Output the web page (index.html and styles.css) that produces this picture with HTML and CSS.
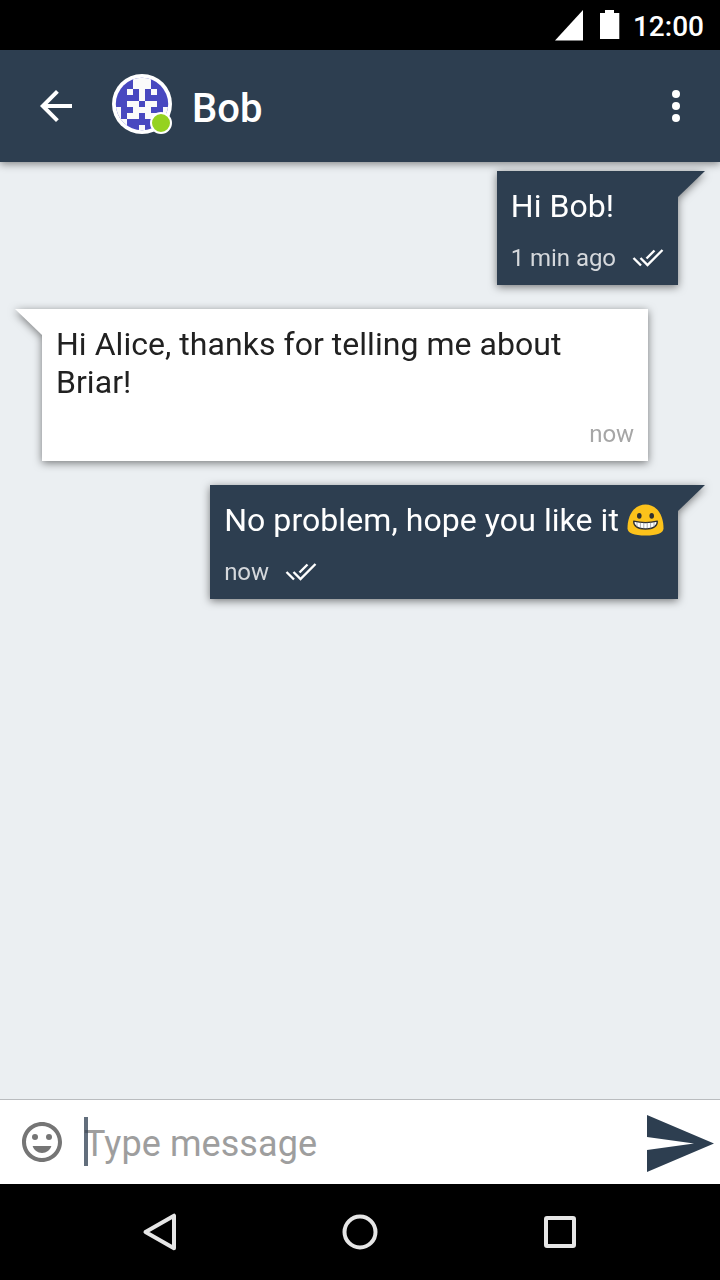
FILE: index.html
```html
<!DOCTYPE html>
<html lang="en">
<head>
<meta charset="utf-8">
<title>Bob</title>
<link rel="stylesheet" href="styles.css">
</head>
<body>
<div class="phone">
  <div class="status-bar">
    <svg class="signal" width="28" height="31" viewBox="0 0 28 31"><path d="M28 0V30.500H0z" fill="#fff"/></svg>
    <svg class="battery" width="20" height="30" viewBox="0 0 20 30"><path d="M5 0h9v3h5.300v26H0V3h5z" fill="#fff"/></svg>
    <span class="clock">12:00</span>
  </div>
  <header class="app-bar">
    <svg class="back" width="32" height="32" viewBox="4 4 16 16"><path d="M20 11H7.830l5.590-5.590L12 4l-8 8 8 8 1.410-1.410L7.830 13H20v-2z" fill="#fff"/></svg>
    <div class="avatar">
      <svg width="60" height="60" viewBox="0 0 60 60">
        <defs><clipPath id="face"><circle cx="30" cy="30" r="26.200"/></clipPath></defs>
        <circle cx="30" cy="30" r="30" fill="#fff"/>
        <g clip-path="url(#face)" shape-rendering="crispEdges">
          <rect x="3" y="3" width="54" height="54" fill="#4848c0"/>
          <path fill="#fafafa" d="M21 3h18v12H21zM15 15h6v6h-6zM27 15h6v12h-6zM39 15h6v6h-6zM15 27h12v6H15zM33 27h12v6H33zM21 33h18v6H21zM15 39h12v6H15zM33 39h12v6H33zM3 33h6v12H3zM51 33h6v12h-6zM3 45h12v12H3zM45 45h12v12H45zM27 51h6v6h-6z"/>
        </g>
      </svg>
      <span class="online"></span>
    </div>
    <h1 class="contact">Bob</h1>
    <svg class="more" width="8" height="32" viewBox="0 0 8 32" fill="#fff"><circle cx="4" cy="4" r="4"/><circle cx="4" cy="16" r="4"/><circle cx="4" cy="28" r="4"/></svg>
  </header>
  <main class="messages">
    <article class="bubble sent">
      <p class="text">Hi Bob!</p>
      <div class="meta"><span class="time">1 min ago</span>
        <svg class="ticks" width="32" height="20" viewBox="0 0 32 20" fill="none" stroke="#fff" stroke-width="2.400"><path d="M1.500 10l7.500 7.500M8.500 10l7 7L30.500 2M14.500 10.500L22.500 2.500"/></svg>
      </div>
    </article>
    <article class="bubble received">
      <p class="text">Hi Alice, thanks for telling me about<br>Briar!</p>
      <div class="meta"><span class="time">now</span></div>
    </article>
    <article class="bubble sent">
      <p class="text with-emoji"><span>No problem, hope you like it</span>
        <svg class="emoji" width="37" height="32" viewBox="0 0 37 32">
          <path d="M18.500 .5C29 .5 36.500 10 36.500 24.500C36.500 29 30 31.500 18.500 31.500S.5 29 .5 24.500C.5 10 8 .5 18.500 .5z" fill="#fcc21b"/>
          <ellipse cx="12.300" cy="11.800" rx="2.300" ry="2.900" fill="#2f2f2f"/>
          <ellipse cx="24.700" cy="11.800" rx="2.300" ry="2.900" fill="#2f2f2f"/>
          <path d="M6.700 17.200C14 19 23 19 30.300 17.200C30.500 22 26.500 25 18.500 25S6.500 22 6.700 17.200z" fill="#fff" stroke="#2f2f2f" stroke-width="1.300" stroke-linejoin="round"/>
          <path d="M10 18v5M13.400 18.500v6M16.800 18.500v6.300M20.200 18.500v6.300M23.600 18.500v6M27 18v5" stroke="#777" stroke-width=".6"/>
        </svg>
      </p>
      <div class="meta"><span class="time">now</span>
        <svg class="ticks" width="32" height="20" viewBox="0 0 32 20" fill="none" stroke="#fff" stroke-width="2.400"><path d="M1.500 10l7.500 7.500M8.500 10l7 7L30.500 2M14.500 10.500L22.500 2.500"/></svg>
      </div>
    </article>
  </main>
  <footer class="composer">
    <svg class="smiley" width="40" height="40" viewBox="2 2 20 20" fill="#757575"><path d="M11.990 2C6.470 2 2 6.480 2 12s4.470 10 9.990 10C17.520 22 22 17.520 22 12S17.520 2 11.990 2zM12 20c-4.420 0-8-3.580-8-8s3.580-8 8-8 8 3.580 8 8-3.580 8-8 8z"/><circle cx="8.500" cy="9.500" r="1.500"/><circle cx="15.500" cy="9.500" r="1.500"/><path d="M7.300 14h9.400c-.6 2-2.500 3.500-4.700 3.500S7.900 16 7.300 14z"/></svg>
    <div class="field"><span class="cursor"></span><span class="placeholder">Type message</span></div>
    <svg class="send" width="67" height="58" viewBox="0 0 67 58"><path d="M0 0L67 28.500L0 57V35L47 28.500L0 22z" fill="#2d3e50"/></svg>
  </footer>
  <nav class="nav-bar">
    <svg width="40" height="40" viewBox="0 0 40 40"><path d="M5.500 20L34 3.700V36.300z"/></svg>
    <svg width="40" height="40" viewBox="0 0 40 40"><circle cx="20" cy="20" r="15.500"/></svg>
    <svg width="40" height="40" viewBox="0 0 40 40"><rect x="6" y="6" width="28" height="28" rx="1"/></svg>
  </nav>
</div>
</body>
</html>
```

FILE: styles.css
```css
* { box-sizing: border-box; margin: 0; padding: 0; }
body { font-family: Roboto, "Noto Sans", sans-serif; background: #000; }
svg { display: block; flex: none; }
.phone { display: flex; flex-direction: column; width: 720px; height: 1280px; overflow: hidden; background: #ebeff2; }

.status-bar { display: flex; justify-content: flex-end; height: 50px; padding: 10px 16px 0 0; background: #000; color: #fff; flex: none; }
.battery { margin: 0 13px 0 16.500px; }
.clock { font-size: 28px; line-height: 33px; font-weight: 500; }

.app-bar { position: relative; z-index: 1; display: flex; align-items: center; height: 112px; padding: 0 40px; background: #2d3e50; color: #fff; box-shadow: 0 2px 8px rgba(0, 0, 0, .45); flex: none; }
.avatar { position: relative; margin: -4px 20px 0 40px; }
.online { position: absolute; left: 38px; top: 38px; width: 22px; height: 22px; border: 2px solid #fff; border-radius: 50%; background: #95d220; }
.contact { font-size: 40px; font-weight: 500; line-height: 48px; padding-top: 6px; }
.more { margin-left: auto; }

.messages { flex: 1; display: flex; flex-direction: column; gap: 24px; padding: 9px 42px 0; }
.bubble { position: relative; padding: 16px 14px 13px; filter: drop-shadow(0 2px 4px rgba(0, 0, 0, .5)); }
.bubble::after { content: ""; position: absolute; top: 0; width: 27px; height: 26px; background: inherit; }
.sent { align-self: flex-end; background: #2d3e50; color: #fff; }
.sent::after { left: 100%; clip-path: polygon(0 0, 100% 0, 0 100%); }
.received { align-self: flex-start; width: 606px; background: #fff; color: #212121; }
.received::after { right: 100%; clip-path: polygon(0 0, 100% 0, 100% 100%); }
.text { font-size: 32px; line-height: 38px; letter-spacing: .04px; white-space: nowrap; }
.with-emoji { display: flex; align-items: center; gap: 8px; letter-spacing: .07px; }
.meta { display: flex; align-items: center; height: 28px; margin-top: 19px; gap: 16px; }
.time { font-size: 24px; line-height: 28px; letter-spacing: -.06px; color: #d5d8dc; }
.received .meta { justify-content: flex-end; }
.received .time { color: #a6a6a6; }

.composer { display: flex; align-items: center; height: 85px; padding: 0 6px 0 22px; border-top: 1px solid #b9bcbf; background: #fff; flex: none; }
.field { position: relative; flex: 1; height: 42px; margin-left: 22px; }
.placeholder { display: block; padding-top: 2px; font-size: 36px; line-height: 42px; letter-spacing: .08px; color: #9e9e9e; }
.cursor { position: absolute; left: 0; top: -4px; width: 4px; height: 49px; background: rgba(45, 62, 80, .75); }
.send { margin-top: 3px; }

.nav-bar { display: flex; justify-content: center; gap: 160px; height: 96px; padding-top: 28px; background: #000; flex: none; }
.nav-bar svg { fill: none; stroke: #e6e6e6; stroke-width: 4; stroke-linejoin: round; }
```
